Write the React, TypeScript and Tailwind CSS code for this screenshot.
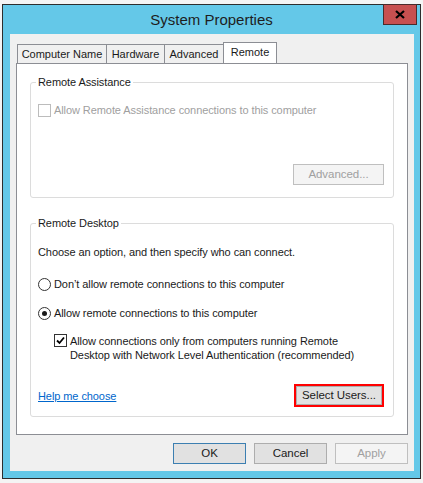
const font = { fontFamily: '"Liberation Sans", Arial, sans-serif' };

const Check = ({ checked, disabled }: { checked?: boolean; disabled?: boolean }) => (
  <span
    className={`flex h-[13px] w-[13px] shrink-0 items-center justify-center border bg-white ${
      disabled ? 'border-[#bcbcbc]' : 'border-[#333333]'
    }`}
  >
    {checked && (
      <svg width="9" height="9" viewBox="0 0 9 9">
        <path d="M1 4.5 L3.5 7 L8 1.5" fill="none" stroke="#000" strokeWidth="1.8" />
      </svg>
    )}
  </span>
);

const Radio = ({ checked }: { checked?: boolean }) => (
  <span className="flex h-[13px] w-[13px] shrink-0 items-center justify-center rounded-full border border-[#333333] bg-white">
    {checked && <span className="h-[5px] w-[5px] rounded-full bg-[#1a1a1a]" />}
  </span>
);

const Button = ({
  label,
  variant = 'normal',
  className = 'h-[21px]',
}: {
  label: string;
  variant?: 'normal' | 'default' | 'disabled';
  className?: string;
}) => {
  const styles =
    variant === 'disabled'
      ? 'border-[#bfbfbf] bg-[#f4f4f4] text-[#a0a0a0]'
      : variant === 'default'
      ? 'border-[#3c7fb1] bg-[#e1e1e1] text-[#1a1a1a]'
      : 'border-[#adadad] bg-[#e1e1e1] text-[#1a1a1a]';
  return (
    <div
      className={`flex items-center justify-center border text-[11.5px] tracking-[-0.05px] ${styles} ${className}`}
    >
      {label}
    </div>
  );
};

const Tab = ({ label, active, w }: { label: string; active?: boolean; w: string }) =>
  active ? (
    <div
      className={`relative z-10 -mb-px flex h-[21px] items-center justify-center border border-b-0 border-[#8c8e94] bg-white pb-[2px] text-[11px] text-[#1a1a1a] ${w}`}
    >
      {label}
    </div>
  ) : (
    <div
      className={`mt-[2px] -mr-px flex h-[19px] items-center justify-center border border-b-0 border-[#8c8e94] bg-[#f0f0f0] text-[11px] text-[#1a1a1a] ${w}`}
    >
      {label}
    </div>
  );

const txt = 'text-[11px] leading-[14px] tracking-[-0.08px] text-[#1a1a1a]';

export default function App() {
  return (
    <div className="h-[483px] w-[423px] overflow-hidden bg-[#f4f4f4]" style={font}>
      <div className="ml-[2px] mt-[4px] flex h-[475px] w-[419px] flex-col border border-[#2d2d2d] bg-[#64c8e8]">
        {/* title bar */}
        <div className="relative flex h-[29px] shrink-0 items-center justify-center pt-[1px]">
          <span className="text-[15px] text-[#1e1e1e]">System Properties</span>
          <div className="absolute right-[3px] top-[-1px] flex h-[21px] w-[34px] items-center justify-center border border-[#4a2b2b] bg-[#c75050]">
            <svg width="10" height="9" viewBox="0 0 10 9">
              <path d="M1 1 L9 8 M9 1 L1 8" stroke="#000" strokeWidth="2.2" />
            </svg>
          </div>
        </div>

        {/* client area */}
        <div className="mb-[7px] ml-[7px] mr-[6px] flex flex-1 flex-col bg-[#f0f0f0] px-[6px] pt-[8px]">
          <div className="flex pl-[1px]">
            <Tab label="Computer Name" w="w-[90px]" />
            <Tab label="Hardware" w="w-[59px]" />
            <Tab label="Advanced" w="w-[60px]" />
            <Tab label="Remote" active w="w-[54px]" />
          </div>

          <div className="flex h-[372px] flex-col border border-[#8c8e94] bg-white px-[13px] pt-[11px]">
            <fieldset className="h-[123px] rounded-[3px] border border-[#dcdcdc] px-[7px]">
              <legend className={`-ml-[2px] px-[2px] ${txt}`}>Remote Assistance</legend>
              <div className="flex h-[107px] flex-col">
                <div className="mt-[14px] flex items-center gap-[3px]">
                  <Check disabled />
                  <span className={`${txt} text-[#a0a0a0]`}>
                    Allow Remote Assistance connections to this computer
                  </span>
                </div>
                <div className="mt-auto mb-[11px] flex justify-end pr-[2px]">
                  <Button label="Advanced..." variant="disabled" className="h-[21px] w-[91px]" />
                </div>
              </div>
            </fieldset>

            <fieldset className="mt-[18px] h-[201px] rounded-[3px] border border-[#dcdcdc] px-[7px]">
              <legend className={`-ml-[2px] px-[2px] ${txt}`}>Remote Desktop</legend>
              <div className="flex h-[185px] flex-col">
                <div className={`mt-[15px] ${txt}`}>Choose an option, and then specify who can connect.</div>
                <div className={`mt-[18px] flex items-center gap-[3px] ${txt}`}>
                  <Radio />
                  <span>Don’t allow remote connections to this computer</span>
                </div>
                <div className={`mt-[15px] flex items-center gap-[3px] ${txt}`}>
                  <Radio checked />
                  <span>Allow remote connections to this computer</span>
                </div>
                <div className={`mt-[14px] flex items-start gap-[3px] pl-[16px] ${txt} leading-[13px]`}>
                  <Check checked />
                  <span>
                    Allow connections only from computers running Remote
                    <br />
                    Desktop with Network Level Authentication (recommended)
                  </span>
                </div>
                <div className="mt-auto mb-[8px] flex items-center justify-between pr-[2px]">
                  <span className={`${txt} text-[#0066cc] underline`}>Help me choose</span>
                  <div className="border-[2px] border-[#ff0000]">
                    <Button label="Select Users..." className="h-[19px] w-[86px]" />
                  </div>
                </div>
              </div>
            </fieldset>
          </div>

          <div className="mt-[8px] flex justify-end gap-[8px]">
            <Button label="OK" variant="default" className="h-[21px] w-[73px]" />
            <Button label="Cancel" className="h-[21px] w-[73px]" />
            <Button label="Apply" variant="disabled" className="h-[21px] w-[73px]" />
          </div>
        </div>
      </div>
    </div>
  );
}
